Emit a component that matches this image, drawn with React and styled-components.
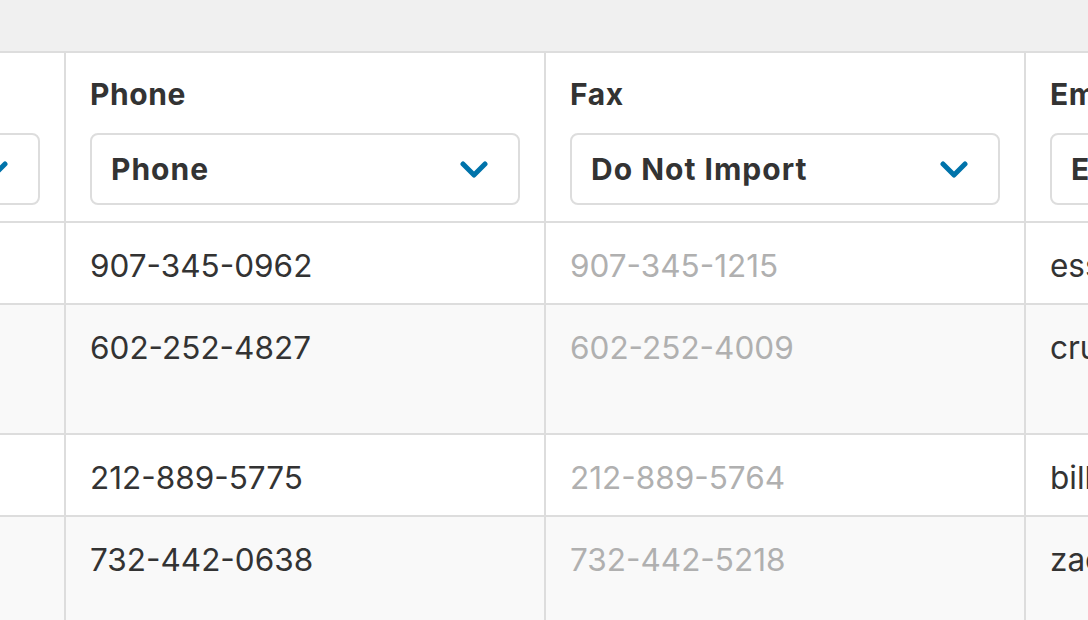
import styled, { createGlobalStyle } from "styled-components";

const GlobalStyle = createGlobalStyle`
  html, body {
    margin: 0;
    padding: 0;
    background: #fff;
    overflow: hidden;
  }
  * {
    box-sizing: border-box;
  }
`;

const columns = [
  { label: "Address", field: "Address", muted: false },
  { label: "Phone", field: "Phone", muted: false },
  { label: "Fax", field: "Do Not Import", muted: true },
  { label: "Email", field: "Email", muted: false },
];

const rows = [
  [["6649 N Blue Gum St"], "907-345-0962", "907-345-1215", "essie@vaill.com"],
  [["4 B Blue Ridge Blvd", "Brighton, MI"], "602-252-4827", "602-252-4009", "cruz.roudabush@gmail.com"],
  [["8 W Cerritos Ave"], "212-889-5775", "212-889-5764", "bill@yahoo.com"],
  [["639 Main St", "Anchorage, AK"], "732-442-0638", "732-442-5218", "zack@hotmail.com"],
];

const Chevron = () => (
  <svg width="28" height="20" viewBox="0 0 28 20" fill="none">
    <polyline
      points="3,5 14,16 25,5"
      stroke="#0073aa"
      strokeWidth="5"
      strokeLinecap="round"
      strokeLinejoin="round"
    />
  </svg>
);

const App = () => {
  return (
    <Page>
      <GlobalStyle />
      <TopBand />
      <Table>
        {columns.map((col) => (
          <HeadCell key={col.label}>
            <Label>{col.label}</Label>
            <Select>
              <SelectText>{col.field}</SelectText>
              <Chevron />
            </Select>
          </HeadCell>
        ))}
        {rows.map((row, i) =>
          row.map((value, j) => (
            <Cell key={i + "-" + j} $striped={i % 2 === 1} $muted={columns[j].muted}>
              {Array.isArray(value)
                ? value.map((line) => <Line key={line}>{line}</Line>)
                : value}
            </Cell>
          ))
        )}
      </Table>
    </Page>
  );
};

export default App;

const Page = styled.div`
  width: 1088px;
  height: 620px;
  overflow: hidden;
  background: #fff;
  font-family: Inter, "Noto Sans", sans-serif;
  color: #333;
`;

const TopBand = styled.div`
  height: 53px;
  background: #f0f0f0;
  border-bottom: 2px solid #ddd;
`;

const Table = styled.div`
  display: grid;
  grid-template-columns: repeat(4, 480px);
  margin-left: -414px;
  width: max-content;
`;

const HeadCell = styled.div`
  padding: 21px 24px 16px;
  border-right: 2px solid #ddd;
  border-bottom: 2px solid #ddd;
  background: #fff;
`;

const Label = styled.div`
  font-size: 30px;
  font-weight: 700;
  letter-spacing: 0.6px;
  line-height: 40px;
  margin-bottom: 19px;
  white-space: nowrap;
  overflow: hidden;
`;

const Select = styled.div`
  height: 72px;
  border: 2px solid #ddd;
  border-radius: 8px;
  padding: 0 30px 0 19px;
  display: flex;
  align-items: center;
  justify-content: space-between;
  background: #fff;
`;

const SelectText = styled.span`
  font-size: 30px;
  font-weight: 700;
  letter-spacing: 1px;
  white-space: nowrap;
`;

const Cell = styled.div`
  padding: 19px 24px 13px;
  font-size: 31.5px;
  line-height: 48px;
  border-right: 2px solid #ddd;
  border-bottom: 2px solid #ddd;
  background: ${(p) => (p.$striped ? "#f9f9f9" : "#fff")};
  color: ${(p) => (p.$muted ? "#b0b0b0" : "#333")};
  overflow: hidden;
  white-space: nowrap;
`;

const Line = styled.div`
  white-space: nowrap;
`;
